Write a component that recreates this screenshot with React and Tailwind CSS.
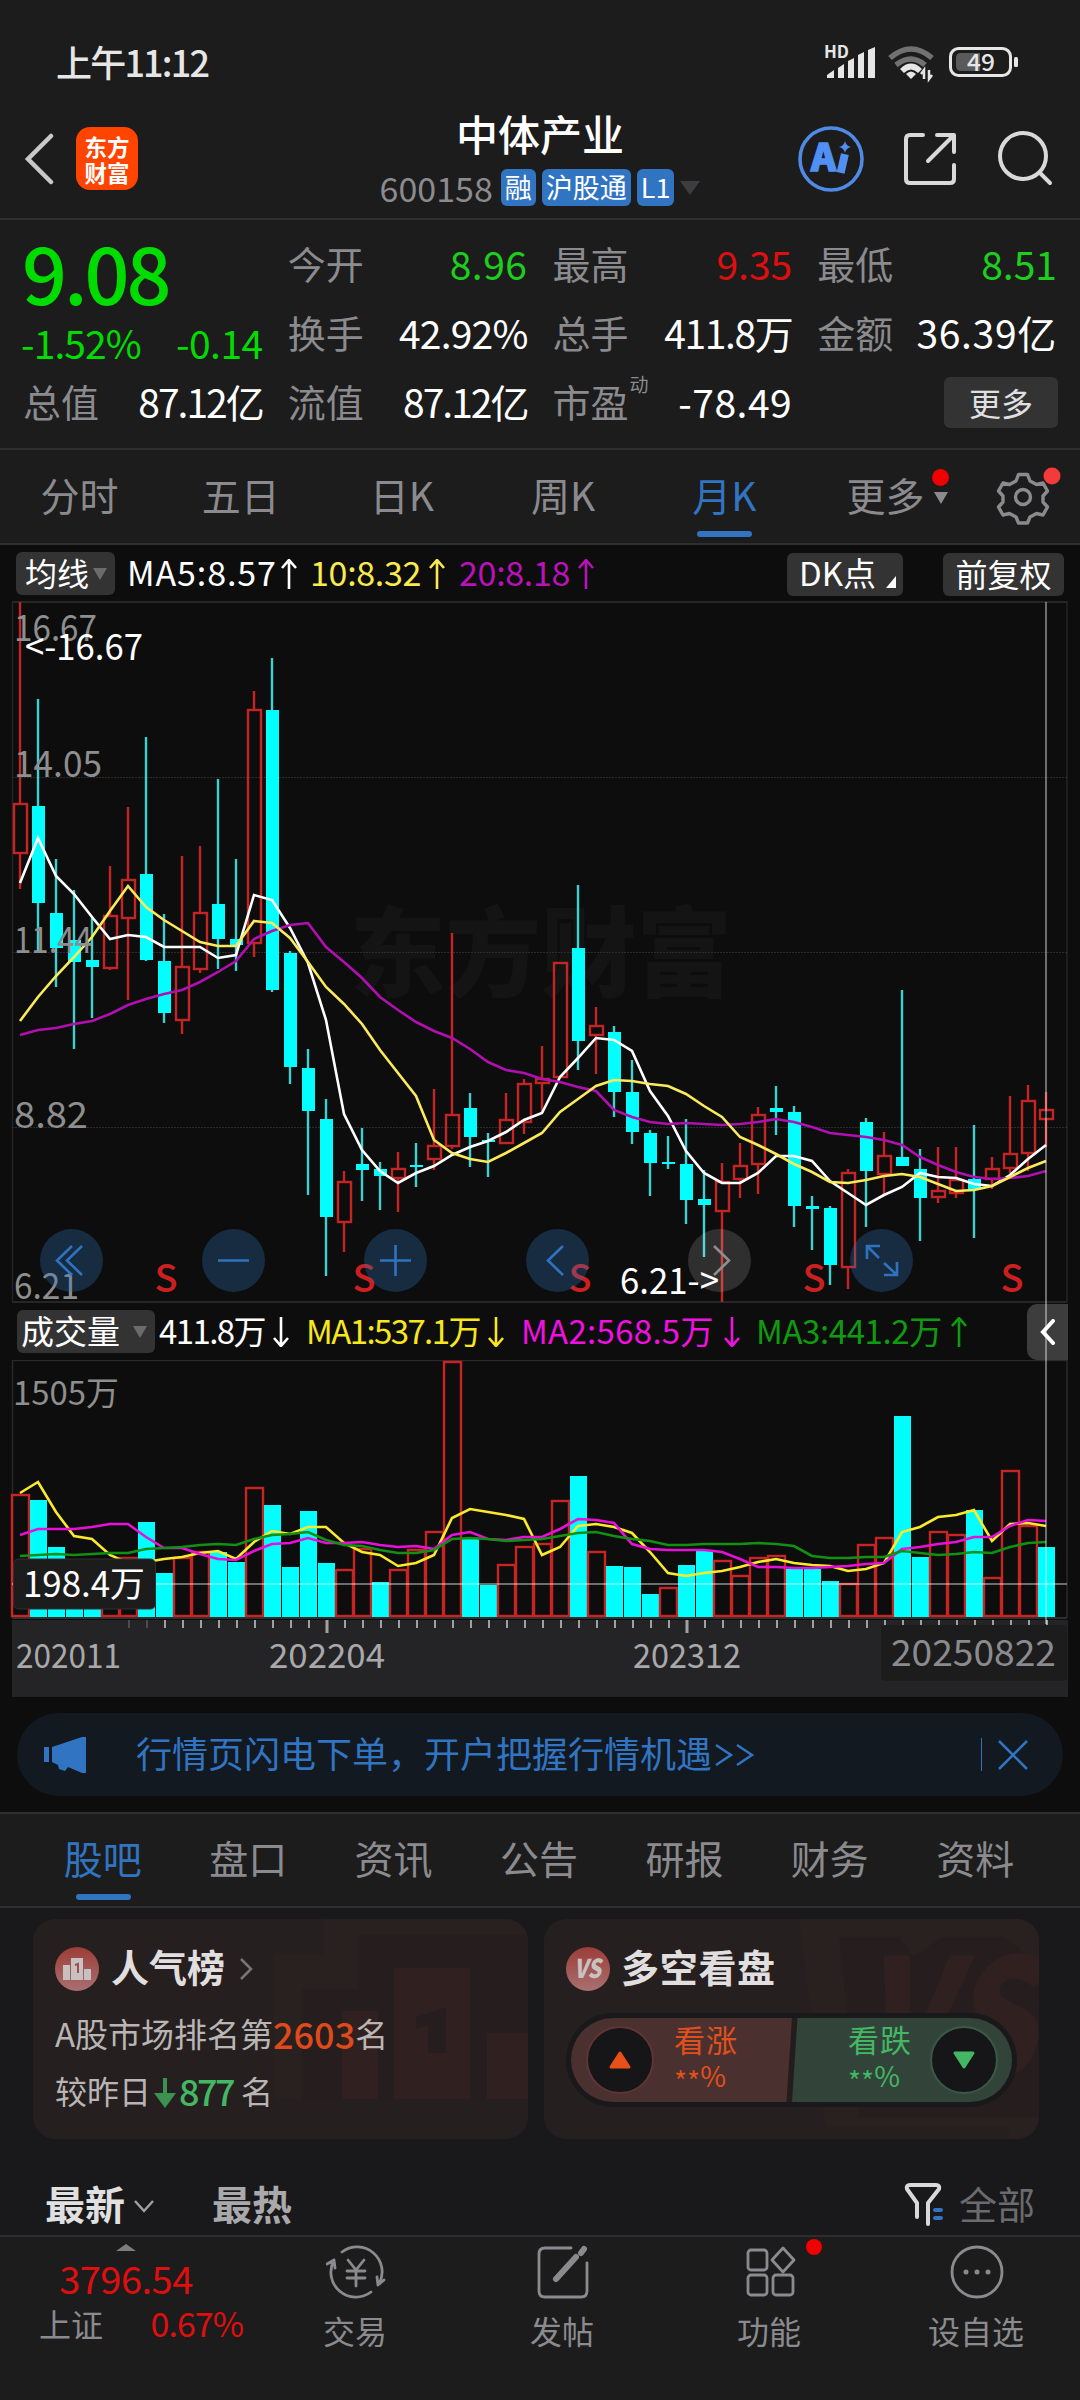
import React from 'react';

const FONT = "font-['Noto_Sans_CJK_SC','Noto_Sans',sans-serif]";

const STEP = 18;
const cx = (i) => 20 + i * STEP;

// [up, high, bodyTop, bodyBottom, low]
const candles = [
    [1, 602, 804, 853, 889], [0, 699, 806, 903, 953], [0, 859, 913, 948, 987], [0, 890, 940, 962, 1049],
    [0, 918, 960, 967, 1018], [1, 866, 916, 968, 970], [1, 807, 880, 918, 1000], [0, 737, 874, 960, 961],
    [0, 914, 961, 1013, 1023], [1, 856, 967, 1020, 1034], [1, 846, 913, 969, 973], [0, 779, 904, 939, 969],
    [0, 859, 939, 945, 971], [1, 691, 710, 943, 957], [0, 658, 710, 990, 992], [0, 951, 953, 1067, 1084],
    [0, 1049, 1068, 1111, 1195], [0, 1099, 1119, 1217, 1276], [1, 1171, 1182, 1222, 1252], [0, 1128, 1164, 1170, 1201],
    [0, 1162, 1169, 1176, 1210], [1, 1152, 1169, 1178, 1212], [0, 1143, 1165, 1167, 1187], [1, 1089, 1146, 1159, 1170],
    [1, 933, 1115, 1146, 1149], [0, 1093, 1108, 1137, 1167], [0, 1133, 1140, 1142, 1177], [1, 1093, 1120, 1143, 1143],
    [1, 1079, 1084, 1122, 1134], [1, 1046, 1079, 1083, 1113], [1, 963, 963, 1077, 1077], [0, 885, 948, 1041, 1070],
    [1, 1007, 1026, 1035, 1074], [0, 1026, 1032, 1092, 1117], [0, 1060, 1092, 1132, 1144], [0, 1130, 1133, 1163, 1196],
    [0, 1136, 1162, 1164, 1169], [0, 1119, 1164, 1200, 1224], [0, 1170, 1199, 1205, 1257], [1, 1163, 1182, 1211, 1302],
    [1, 1143, 1166, 1179, 1198], [1, 1107, 1115, 1164, 1194], [0, 1086, 1108, 1112, 1135], [0, 1106, 1112, 1206, 1227],
    [0, 1196, 1206, 1209, 1250], [0, 1206, 1208, 1265, 1285], [1, 1169, 1173, 1267, 1289], [0, 1118, 1122, 1171, 1227],
    [1, 1132, 1156, 1174, 1196], [0, 990, 1157, 1166, 1166], [0, 1149, 1169, 1198, 1241], [1, 1147, 1191, 1197, 1203],
    [1, 1147, 1180, 1193, 1198], [0, 1125, 1179, 1189, 1238], [1, 1157, 1169, 1179, 1189], [1, 1096, 1154, 1168, 1173],
    [1, 1085, 1101, 1153, 1171], [1, 1092, 1110, 1119, 1147],
];

const ma5 = [883, 838, 876, 894, 917, 939, 935, 937, 947, 947, 947, 958, 955, 895, 900, 928, 963, 1020, 1114, 1150, 1171, 1183, 1173, 1166, 1155, 1147, 1141, 1132, 1120, 1113, 1077, 1058, 1038, 1040, 1051, 1091, 1116, 1151, 1173, 1183, 1183, 1173, 1156, 1156, 1161, 1181, 1193, 1205, 1195, 1187, 1173, 1177, 1178, 1184, 1186, 1175, 1159, 1145];
const ma10 = [1021, 997, 976, 957, 937, 911, 886, 907, 920, 931, 942, 946, 946, 921, 923, 938, 962, 987, 1004, 1024, 1050, 1073, 1096, 1140, 1153, 1159, 1162, 1153, 1143, 1133, 1112, 1099, 1086, 1080, 1081, 1084, 1086, 1094, 1106, 1117, 1137, 1145, 1154, 1164, 1172, 1182, 1183, 1180, 1176, 1174, 1177, 1184, 1191, 1190, 1186, 1177, 1168, 1161];
const ma20 = [1035, 1030, 1028, 1024, 1021, 1014, 1005, 999, 994, 990, 982, 972, 961, 939, 931, 925, 923, 947, 962, 978, 997, 1010, 1022, 1031, 1038, 1049, 1062, 1070, 1073, 1079, 1082, 1087, 1091, 1110, 1117, 1122, 1124, 1123, 1124, 1125, 1124, 1122, 1119, 1122, 1127, 1133, 1135, 1137, 1140, 1145, 1157, 1165, 1172, 1177, 1179, 1178, 1176, 1171];

const volTops = [1494, 1500, 1547, 1565, 1570, 1575, 1557, 1522, 1573, 1557, 1551, 1552, 1562, 1487, 1505, 1567, 1511, 1563, 1569, 1548, 1582, 1569, 1549, 1531, 1361, 1539, 1585, 1564, 1546, 1543, 1500, 1476, 1551, 1566, 1567, 1594, 1587, 1565, 1551, 1560, 1575, 1557, 1555, 1569, 1569, 1581, 1583, 1544, 1537, 1416, 1557, 1531, 1534, 1510, 1577, 1470, 1525, 1547];
// indexes of the filled volume bars
const volDown = [1, 2, 3, 4, 7, 8, 11, 12, 14, 15, 16, 17, 20, 25, 26, 31, 33, 34, 35, 37, 38, 43, 44, 45, 49, 50, 53, 57];
const vma1 = [1493, 1482, 1512, 1536, 1539, 1555, 1563, 1562, 1559, 1557, 1553, 1551, 1559, 1542, 1531, 1534, 1527, 1527, 1543, 1552, 1555, 1566, 1563, 1555, 1518, 1509, 1512, 1515, 1519, 1555, 1547, 1526, 1524, 1527, 1533, 1552, 1573, 1576, 1573, 1571, 1567, 1562, 1559, 1563, 1565, 1566, 1571, 1569, 1563, 1532, 1527, 1517, 1515, 1510, 1541, 1524, 1523, 1526];
const vma2 = [1535, 1529, 1529, 1529, 1527, 1524, 1524, 1537, 1548, 1548, 1554, 1559, 1560, 1551, 1544, 1543, 1538, 1543, 1543, 1542, 1545, 1547, 1546, 1549, 1535, 1532, 1539, 1540, 1537, 1537, 1529, 1519, 1520, 1523, 1544, 1549, 1550, 1550, 1550, 1552, 1559, 1567, 1567, 1568, 1568, 1567, 1566, 1564, 1563, 1549, 1547, 1544, 1542, 1537, 1537, 1526, 1520, 1521];
const vma3 = [1556, 1555, 1554, 1555, 1554, 1553, 1553, 1549, 1548, 1547, 1545, 1544, 1545, 1539, 1535, 1534, 1532, 1540, 1545, 1546, 1550, 1553, 1553, 1550, 1539, 1538, 1539, 1541, 1540, 1539, 1536, 1533, 1532, 1536, 1539, 1541, 1545, 1545, 1544, 1544, 1544, 1543, 1544, 1546, 1556, 1558, 1558, 1557, 1557, 1551, 1553, 1555, 1554, 1552, 1553, 1547, 1543, 1542];

const points = (ys) => ys.map((y, i) => `${cx(i)},${y}`).join(' ');

const StatusBar = () => (
    <div className="flex h-[112px] items-center justify-between pt-[9px] pl-[56px] pr-[60px]">
        <span className="text-[36px] leading-[40px] font-medium tracking-[-1.8px] text-[#e6e6e6]">上午11:12</span>
        <svg className="overflow-visible" width="200" height="40" viewBox="820 42 200 40" fill="none">
            <text x="824" y="59" fontSize="17" fontWeight="700" fill="#e6e6e6" textLength="25" lengthAdjust="spacingAndGlyphs">HD</text>
            <g fill="#e6e6e6">
                <path d="M827 76l7-5v8h-7zM838 69l6-4v14h-6zM848 62l6-3v20h-6zM858 56l6-3v26h-6zM868 51l7-3v31h-7z" />
                <path d="M911 80l-5-5q5-5 10 0z" />
            </g>
            <g strokeWidth="5.5">
                <path d="M890 59q21-18 42 0" stroke="#717171" />
                <path d="M896 66q15-12 29 0" stroke="#717171" />
                <path d="M902 72q9-9 18 0" stroke="#e6e6e6" />
            </g>
            <path d="M924 80v-9l-3 4M929 71v9l3-4" stroke="#e6e6e6" strokeWidth="2.5" />
            <rect x="950.5" y="49.5" width="60" height="27" rx="8" stroke="#e6e6e6" strokeWidth="3" />
            <path d="M961 54h19v18h-19q-5 0-5-5v-8q0-5 5-5z" fill="#5a5a5a" />
            <rect x="1014" y="58" width="4" height="10" rx="1.5" fill="#e6e6e6" />
            <text x="967" y="72" fontSize="24" fontWeight="500" fill="#e6e6e6" textLength="28" lengthAdjust="spacingAndGlyphs">49</text>
        </svg>
    </div>
);

const Badge = ({ children }) => (
    <span className="h-[37px] rounded-[6px] bg-[#3174c2] px-[4px] text-[27px] leading-[35px] text-white">{children}</span>
);

const Header = () => (
    <div className="grid h-[108px] grid-cols-[1fr_auto_1fr] border-b-2 border-[#2e2e30]">
        <div className="flex items-center gap-[22px] pl-[24px] pb-[14px] pt-px">
            <svg width="30" height="54" viewBox="0 0 30 54" fill="none" stroke="#c9c9c9" strokeWidth="4.5" strokeLinecap="round">
                <path d="M27 4L4 27l23 23" />
            </svg>
            <div className="flex h-[63px] w-[62px] flex-col items-center justify-center rounded-[14px] bg-[#ff4400] text-[22.5px] leading-[26px] font-bold text-white">
                <span>东方</span>
                <span>财富</span>
            </div>
        </div>
        <div className="flex flex-col items-center">
            <h1 className="mt-[-1px] text-[42px] leading-[44px] font-medium text-white">中体产业</h1>
            <div className="mt-[14px] flex items-center gap-[6px]">
                <span className="mr-[2px] text-[34px] leading-[36px] text-[#8b8b8f]">600158</span>
                <Badge>融</Badge>
                <Badge>沪股通</Badge>
                <Badge>L1</Badge>
                <svg width="20" height="14" viewBox="0 0 20 14"><path d="M0 0h20L10 14z" fill="#3d3d3f" /></svg>
            </div>
        </div>
        <div className="flex items-center justify-end pr-[26px] pb-[13px]">
            <svg width="258" height="70" viewBox="796 123 258 70" fill="none">
                <circle cx="831" cy="158" r="31" stroke="#4f8ae6" strokeWidth="3.6" />
                <text x="811" y="170" fontSize="37" fontWeight="900" fill="#5090f5" stroke="#5090f5" strokeWidth="1.5" textLength="25" lengthAdjust="spacingAndGlyphs">A</text>
                <path d="M844 157l-2.500 11" stroke="#5090f5" strokeWidth="8" strokeLinecap="square" />
                <path d="M845 140q1 5 6 6q-5 1-6 6q-1-5-6-6q5-1 6-6z" fill="#5090f5" />
                <g stroke="#d9d9d9" strokeWidth="4" strokeLinecap="round" strokeLinejoin="round">
                    <path d="M923 134h-13q-4 0-4 4v40q0 4 4 4h40q4 0 4-4v-14M937 134h17v17M953 135l-25 25" />
                    <circle cx="1023" cy="155" r="23" />
                    <path d="M1040 172l10 10" />
                </g>
            </svg>
        </div>
    </div>
);

const Stat = ({ label, value, sup, color = 'text-white', tracking = '' }) => (
    <div className="flex h-[69px] items-center justify-between text-[38px] leading-[44px]">
        <span className="flex whitespace-nowrap text-[#8b8b8f]">
            {label}
            {sup && <sup className="top-[-5px] ml-px h-[20px] w-[18px] text-[19px] leading-[20px]">{sup}</sup>}
        </span>
        <span className={`text-[39px] whitespace-nowrap ${color} ${tracking}`}>{value}</span>
    </div>
);

const Quote = () => (
    <div className="grid h-[230px] grid-cols-4 gap-x-[25px] border-b-2 border-[#2e2e30] px-[23px] pt-[8px]">
        <div>
            <div className="flex h-[138px] flex-col text-[#00dc00]">
                <span className="mt-[2px] ml-[-1px] text-[79px] leading-[82px] font-medium tracking-[-3px]">9.08</span>
                <div className="mt-[6px] flex justify-between text-[39px] leading-[48px]">
                    <span className="ml-[-2px] tracking-[-0.9px]">-1.52%</span>
                    <span className="tracking-[-0.5px]">-0.14</span>
                </div>
            </div>
            <Stat label="总值" value="87.12亿" tracking="tracking-[-2px]" />
        </div>
        <div>
            <Stat label="今开" value="8.96" color="text-[#1ccf1c]" tracking="tracking-[0.5px]" />
            <Stat label="换手" value="42.92%" tracking="tracking-[-0.8px]" />
            <Stat label="流值" value="87.12亿" tracking="tracking-[-2px]" />
        </div>
        <div>
            <Stat label="最高" value="9.35" color="text-[#df0f0f]" />
            <Stat label="总手" value="411.8万" tracking="tracking-[-1.4px]" />
            <Stat label="市盈" sup="动" value="-78.49" tracking="tracking-[0.5px]" />
        </div>
        <div>
            <Stat label="最低" value="8.51" color="text-[#1ccf1c]" />
            <Stat label="金额" value="36.39亿" tracking="tracking-[0.7px]" />
            <div className="flex h-[69px] items-center justify-end">
                <button className="mr-[-1px] mt-[3px] h-[51px] w-[114px] rounded-[6px] bg-[#333333] text-[32px] leading-[46px] text-[#e0e0e0]">更多</button>
            </div>
        </div>
    </div>
);

const periods = ['分时', '五日', '日K', '周K', '月K', '更多'];

const PeriodTabs = () => (
    <div className="flex h-[95px] border-b-2 border-[#2e2e30] text-[39px] leading-[44px] text-[#8b8b8f]">
        {periods.map((name) => (
            <div key={name} className={`relative flex w-[161.2px] flex-col items-center pt-[22px] pr-[2px] ${name === '月K' ? 'text-[#3174c2]' : ''}`}>
                {name}
                {name === '月K' && <span className="mt-[15px] h-[6px] w-[55px] rounded-full bg-[#3174c2]" />}
                {name === '更多' && (
                    <svg className="absolute top-[19px] left-[126px]" width="18" height="36" viewBox="0 0 18 36">
                        <circle cx="8.5" cy="8.5" r="8.5" fill="#f00000" />
                        <path d="M2 23h14l-7 12z" fill="#8b8b8f" />
                    </svg>
                )}
            </div>
        ))}
        <svg className="mt-[17px] ml-[29px]" width="68" height="58" viewBox="996 468 68 58" fill="none">
            <path d="M1018.500 475.500h9l2.500 6.500 6.500 3.500 6.500-1.500 4.500 8-4.500 5v6l4.500 5-4.500 8-6.500-1.500-6.500 3.500-2.500 6h-9l-2.500-6-6.500-3.500-6.500 1.500-4.500-8 4.500-5v-6l-4.500-5 4.500-8 6.500 1.500 6.500-3.500z" stroke="#8b8b8f" strokeWidth="3.400" strokeLinejoin="round" />
            <circle cx="1023" cy="498" r="7.500" stroke="#8b8b8f" strokeWidth="3.400" />
            <circle cx="1052" cy="477" r="8.500" fill="#f53a3a" />
        </svg>
    </div>
);

const Arrow = ({ down, className = '' }) => (
    <svg className={className} width="16" height="30" viewBox="0 0 16 30" fill="none" stroke="currentColor" strokeWidth="2.6">
        <path d={down ? 'M8 0v29M1 21l7 8 7-8' : 'M8 30V1M1 9l7-8 7 8'} />
    </svg>
);

const MaRow = () => (
    <div className="flex h-[57px] items-center pl-[16px] pr-[16px] text-[33px] leading-[44px]">
        <button className="flex h-[43px] w-[99px] items-center rounded-[6px] bg-[#333333] pb-[3px] pl-[9px] text-[32px] text-white">
            均线
            <svg width="14" height="12" viewBox="0 0 14 12" className="mt-[3px] ml-[4px]"><path d="M0 0h14L7 12z" fill="#6b6b6b" /></svg>
        </button>
        <div className="flex w-[182px] items-center pl-[12px] text-white">
            <span className="mt-[-4px] w-[154px] text-[34px] tracking-[0.9px]">MA5:8.57</span><Arrow />
        </div>
        <div className="flex w-[148px] items-center pl-[13px] text-[#fbea4f]">
            <span className="mt-[-4px] w-[119px] text-[34px] tracking-[-0.3px]">10:8.32</span><Arrow />
        </div>
        <div className="flex items-center pl-[14px] text-[#b812b8]">
            <span className="mt-[-4px] w-[119px] text-[34px] tracking-[-0.3px]">20:8.18</span><Arrow />
        </div>
        <button className="mt-px ml-auto flex h-[43px] w-[116px] items-center rounded-[6px] bg-[#333333] pb-[4px] pl-[10px] text-white">
            <span className="w-[81px] whitespace-nowrap">DK点</span>
            <svg width="10" height="12" viewBox="0 0 10 12" className="mt-[19px] ml-[8px]"><path d="M10 0v12H0z" fill="#fff" /></svg>
        </button>
        <button className="mt-px ml-[40px] h-[43px] w-[121px] rounded-[6px] bg-[#333333] pb-[3px] text-[32px] leading-[38px] text-white">前复权</button>
    </div>
);

const priceLabels = [
    [641, '16.67', 83], [777, '14.05', 88], [953, '11.44', 78], [1128, '8.82', 74], [1299, '6.21', 65],
];

const KChart = () => (
    <svg className="block" width="1080" height="702" viewBox="0 601 1080 702" fill="none">
        <text x="350" y="989" fontSize="98" fontWeight="900" fill="#141414" textLength="382" lengthAdjust="spacingAndGlyphs">东方财富</text>
        <path d="M12.500 1302V602H1067V1302" stroke="#242424" strokeWidth="1.500" />
        <path d="M12 602H1067M12 1302H1067" stroke="#262626" strokeWidth="2" />
        <path d="M12 777.500H1067M12 952.500H1067M12 1127.500H1067" stroke="#2c2c2c" strokeDasharray="2 1" />
        {candles.map(([up, high, top, bottom, low], i) => (
            up ? (
                <g key={i} stroke="#c42424" strokeWidth="2.400">
                    <path d={`M${cx(i)} ${high}V${top}M${cx(i)} ${bottom}V${low}`} />
                    <rect x={cx(i) - 6} y={top} width="13" height={bottom - top} />
                </g>
            ) : (
                <g key={i}>
                    <path d={`M${cx(i)} ${high}V${low}`} stroke="#40d0d0" strokeWidth="2.400" />
                    <rect x={cx(i) - 6} y={top} width="13" height={bottom - top} fill="#00ffff" />
                </g>
            )
        ))}
        <polyline points={points(ma5)} stroke="#ffffff" strokeWidth="2.600" />
        <polyline points={points(ma20)} stroke="#b010b0" strokeWidth="2.600" />
        <polyline points={points(ma10)} stroke="#fbea5c" strokeWidth="2.600" />
        {priceLabels.map(([y, label, w]) => (
            <text key={label} x="14" y={y} fontSize="36" fill="#8e8e8e" textLength={w} lengthAdjust="spacingAndGlyphs">{label}</text>
        ))}
        <text x="25" y="660" fontSize="37" fill="#ffffff" textLength="118" lengthAdjust="spacingAndGlyphs">{'<-16.67'}</text>
        <text x="620" y="1294" fontSize="37" fill="#ffffff" textLength="99" lengthAdjust="spacingAndGlyphs">{'6.21->'}</text>
        {[166, 364, 580, 814, 1012].map((x) => (
            <text key={x} x={x} y="1291.500" fontSize="38" fontWeight="500" fill="#cc2020" textAnchor="middle">S</text>
        ))}
        {[71.500, 233.500, 395.500, 557.500, 881.500].map((x) => (
            <circle key={x} cx={x} cy="1260.500" r="31.500" fill="#3174c2" fillOpacity="0.29" />
        ))}
        <circle cx="719.500" cy="1260.500" r="31.500" fill="#ffffff" fillOpacity="0.14" />
        <g stroke="#2f73c0" strokeWidth="2.600">
            <path d="M72 1246l-15 14.500 15 14.500M82 1246l-15 14.500 15 14.500" />
            <path d="M218 1260.500h31M380 1260.500h31M395.500 1245v31" />
            <path d="M563 1246l-15 14.500 15 14.500" />
            <path d="M867 1259v-13h13M867 1246l12 12M897 1262v13h-13M897 1275l-13-12" />
        </g>
        <path d="M714 1246l15 14.500-15 14.500" stroke="#8e8e8e" strokeWidth="2.600" />
    </svg>
);

const VolumeHeader = () => (
    <div className="flex h-[57px] items-center pl-[17px] text-[33px] leading-[44px]">
        <button className="flex h-[43px] w-[138px] items-center rounded-[6px] bg-[#333333] pb-[3px] pl-[4px] text-[33px] text-white">
            成交量
            <svg width="14" height="12" viewBox="0 0 14 12" className="mt-[3px] ml-[13px]"><path d="M0 0h14L7 12z" fill="#6b6b6b" /></svg>
        </button>
        <div className="flex w-[151px] items-center pl-[4px] text-white">
            <span className="mt-[-4px] w-[114px] tracking-[-1.6px] whitespace-nowrap">411.8万</span><Arrow down />
        </div>
        <div className="flex w-[215px] items-center text-[#f8e71c]">
            <span className="mt-[-4px] w-[182px] tracking-[-1.6px] whitespace-nowrap">MA1:537.1万</span><Arrow down />
        </div>
        <div className="flex w-[235px] items-center text-[#f010e0]">
            <span className="mt-[-4px] w-[203px] tracking-[0.3px] whitespace-nowrap">MA2:568.5万</span><Arrow down />
        </div>
        <div className="flex items-center text-[#109a10]">
            <span className="mt-[-4px] w-[195px] tracking-[-0.4px] whitespace-nowrap">MA3:441.2万</span><Arrow />
        </div>
        <button className="ml-auto mr-[12px] flex h-[56px] w-[41px] items-center justify-center rounded-l-[10px] bg-[#3d3d3d]">
            <svg width="16" height="26" viewBox="0 0 16 26" fill="none" stroke="#fff" strokeWidth="4" strokeLinecap="round"><path d="M13 2L3 13l10 11" /></svg>
        </button>
    </div>
);

const VolumeChart = () => (
    <svg className="block" width="1080" height="337" viewBox="0 1360 1080 337" fill="none">
        <path d="M12.500 1618V1360.500H1067V1618" stroke="#2a2a2a" strokeWidth="1.500" />
        <path d="M12 1618H1067" stroke="#2e2e2e" strokeWidth="2" />
        <rect x="12" y="1620" width="1056" height="77" fill="#242427" />
        {volTops.map((y, i) => (
            volDown.includes(i)
                ? <rect key={i} x={12 + i * STEP} y={y} width="17" height={1617 - y} fill="#00ffff" />
                : <rect key={i} x={12 + i * STEP} y={y + 1} width="17" height={1616 - y - 1} stroke="#c82424" strokeWidth="2.400" />
        ))}
        <polyline points={points(vma1)} stroke="#fbea2c" strokeWidth="2.600" />
        <polyline points={points(vma2)} stroke="#e810d8" strokeWidth="2.600" />
        <polyline points={points(vma3)} stroke="#129012" strokeWidth="2.600" />
        <path d="M12 1584H1067" stroke="#ffffff" strokeOpacity="0.4" strokeWidth="2" />
        <text x="13" y="1405" fontSize="33" fill="#8e8e8e" textLength="106" lengthAdjust="spacingAndGlyphs">1505万</text>
        <rect x="13.500" y="1559" width="142" height="50" rx="5" fill="#1c1c1c" stroke="#303030" />
        <text x="23" y="1597" fontSize="35" fill="#ffffff" textLength="122" lengthAdjust="spacingAndGlyphs">198.4万</text>
        {candles.map((_, i) => {
            if (i < 6) return null;
            const major = i === 17 || i === 37;
            return <path key={i} d={`M${21 + i * STEP} 1620v${major ? 13 : 8}`} stroke={i < 8 ? '#4c4c4e' : '#a0a0a2'} strokeWidth={major ? 3 : 2} />;
        })}
        <g fontSize="34" fill="#a9a9ab">
            <text x="16" y="1668" textLength="105" lengthAdjust="spacingAndGlyphs">202011</text>
            <text x="269" y="1668" textLength="116" lengthAdjust="spacingAndGlyphs">202204</text>
            <text x="633" y="1668" textLength="108" lengthAdjust="spacingAndGlyphs">202312</text>
        </g>
        <rect x="881" y="1625" width="186" height="56" rx="4" fill="#1c1c1c" />
        <text x="891" y="1666" fontSize="36" fill="#8b8b8f" textLength="165" lengthAdjust="spacingAndGlyphs">20250822</text>
    </svg>
);

const Banner = () => (
    <div className="mx-[17px] mt-[16px] flex h-[83px] items-center rounded-full bg-[#121920] text-[36px] leading-[44px] text-[#3174c2]">
        <svg className="ml-[27px]" width="43" height="38" viewBox="0 0 43 38" fill="#3174c2">
            <path d="M0 11h5v15H0zM8 11L38 1h4v36h-4l-14-6-3 4-6-2-1-4-6-3z" />
        </svg>
        <span className="mt-[-5px] ml-[49px] whitespace-nowrap">行情页闪电下单，开户把握行情机遇</span>
        <svg className="ml-[3px]" width="40" height="28" viewBox="0 0 40 28" fill="none" stroke="#3174c2" strokeWidth="2.500">
            <path d="M1 4l15 10-15 10M22 4l15 10-15 10" />
        </svg>
        <span className="ml-auto h-[33px] w-px bg-[#3174c2]" />
        <svg className="ml-[16px] mr-[35px]" width="30" height="30" viewBox="0 0 30 30" fill="none" stroke="#3174c2" strokeWidth="2.500">
            <path d="M1 1l28 28M29 1L1 29" />
        </svg>
    </div>
);

const sections = ['股吧', '盘口', '资讯', '公告', '研报', '财务', '资料'];

const SectionTabs = () => (
    <div className="mt-[16px] flex h-[96px] border-y-2 border-[#2e2e30] bg-[#1c1c1c] px-[31px] text-[39px] leading-[44px] text-[#8b8b8f]">
        {sections.map((name, i) => (
            <div key={name} className={`flex flex-1 flex-col items-center pt-[21px] ${i === 0 ? 'text-[#3174c2]' : ''}`}>
                <span className="ml-[-2px]">{name}</span>
                {i === 0 && <span className="mt-[15px] h-[6px] w-[55px] rounded-full bg-[#3174c2]" />}
            </div>
        ))}
    </div>
);

const RankCard = () => (
    <div className="relative h-[220px] w-[495px] overflow-hidden rounded-[22px] bg-[#261f1f] pl-[22px] text-[#b9b5b5]">
        <svg className="absolute top-0 right-0" width="260" height="220" viewBox="0 0 260 220">
            <path d="M6 36h50V0h204v180H6z" fill="#292120" />
            <path d="M34 70h56V16h170v164H34z" fill="#261e1e" />
            <path d="M74 92h36v88H74zM126 49h76v131h-76zM219 114h41v66h-41z" fill="#302120" />
            <path d="M148 98l30-10v46h-18v-28l-12 4z" fill="#261e1e" />
        </svg>
        <div className="relative flex items-center pt-[28px]">
            <svg width="44" height="44" viewBox="0 0 44 44">
                <defs>
                    <linearGradient id="badge" x1="0" y1="0" x2="0" y2="1">
                        <stop offset="0" stopColor="#9c3d38" />
                        <stop offset="1" stopColor="#a87070" />
                    </linearGradient>
                </defs>
                <circle cx="22" cy="22" r="22" fill="url(#badge)" />
                <path d="M8 18h7v15H8zM16 11h12v22H16zM29 22h7v11h-7z" fill="#c9c1c1" />
                <path d="M20 18l3-1v9" stroke="#9c5050" strokeWidth="2" fill="none" />
            </svg>
            <span className="mt-[-6px] ml-[12px] text-[38px] leading-[44px] font-bold text-[#e0dede]">人气榜</span>
            <svg className="ml-[15px]" width="13" height="22" viewBox="0 0 13 22" fill="none" stroke="#7a7575" strokeWidth="2.500"><path d="M1 1l10 10L1 21" /></svg>
        </div>
        <div className="relative mt-[18px] flex text-[33px] leading-[48px]">
            A股市场排名第<b className="text-[36px] font-medium text-[#de4a1c]">2603</b>名
        </div>
        <div className="relative mt-[9px] flex items-center text-[32px] leading-[48px]">
            较昨日
            <svg className="mt-[5px] mx-[3px]" width="22" height="30" viewBox="0 0 22 30" fill="#3c9150"><path d="M9 0h4v15h9L11 30 0 15h9z" /></svg>
            <b className="mr-[8px] text-[36px] font-medium tracking-[-2.5px] text-[#43b764]">877</b>名
        </div>
    </div>
);

const VsCard = () => (
    <div className="relative h-[220px] w-[495px] overflow-hidden rounded-[22px] bg-[#261f1f] pl-[22px]">
        <svg className="absolute top-0 right-0" width="260" height="220" viewBox="0 0 260 220">
            <path d="M20 0h240v220h-30v-12H46z" fill="#292120" />
            <path d="M60 18h60l14 20 30-20h60q36 20 36 60v120H80z" fill="#261e1e" />
            <text x="80" y="160" fontSize="166" fontWeight="900" fontStyle="italic" fill="#302120" textLength="176" lengthAdjust="spacingAndGlyphs">VS</text>
        </svg>
        <div className="relative flex items-center pt-[28px]">
            <svg width="44" height="44" viewBox="0 0 44 44">
                <circle cx="22" cy="22" r="22" fill="url(#badge)" />
                <text x="8" y="31" fontSize="26" fontWeight="900" fontStyle="italic" fill="#c9c1c1" textLength="27" lengthAdjust="spacingAndGlyphs">VS</text>
            </svg>
            <span className="mt-[-6px] ml-[11px] text-[38px] leading-[44px] font-bold tracking-[0.7px] text-[#e0dede]">多空看盘</span>
        </div>
        <div className="relative mt-[22px] flex h-[94px] w-[451px] overflow-hidden rounded-full border-[5px] border-[#19191b] bg-[#231d1d] text-[31px] leading-[42px]">
            <div className="flex w-[221px] items-center bg-[#4a302e] pl-[15px] text-[#e0501e] [clip-path:polygon(0_0,100%_0,97.5%_100%,0_100%)]">
                <span className="flex h-[68px] w-[68px] items-center justify-center rounded-full border-2 border-[#603533] bg-[#161618]">
                    <svg width="22" height="18" viewBox="0 0 22 18"><path d="M11 2l9 14H2z" fill="#e8501a" stroke="#e8501a" strokeWidth="3" strokeLinejoin="round" /></svg>
                </span>
                <div className="mt-[-8px] ml-[20px] flex flex-col">
                    <span className="tracking-[1px]">看涨</span>
                    <span className="mt-[-4px] text-[28px] leading-[38px]"><span className="relative top-[5px]">**</span>%</span>
                </div>
            </div>
            <div className="flex flex-1 items-center justify-end bg-[#324439] pr-[14px] text-[#43b764] [clip-path:polygon(2.5%_0,100%_0,100%_100%,0_100%)]">
                <div className="mt-[-8px] mr-[18px] flex flex-col">
                    <span className="tracking-[1px]">看跌</span>
                    <span className="mt-[-4px] text-[28px] leading-[38px]"><span className="relative top-[5px]">**</span>%</span>
                </div>
                <span className="flex h-[68px] w-[68px] items-center justify-center rounded-full border-2 border-[#3a5a47] bg-[#161618]">
                    <svg width="22" height="18" viewBox="0 0 22 18"><path d="M11 16L2 2h18z" fill="#43b764" stroke="#43b764" strokeWidth="3" strokeLinejoin="round" /></svg>
                </span>
            </div>
        </div>
    </div>
);

const SortRow = () => (
    <div className="flex h-[96px] items-center pl-[45px] pr-[45px] pt-[32px] text-[40px] leading-[44px]">
        <span className="font-bold text-[#e0e0e0]">最新</span>
        <svg className="mt-[6px] ml-[9px]" width="20" height="13" viewBox="0 0 20 13" fill="none" stroke="#a0a0a0" strokeWidth="2.500"><path d="M1 1l9 10 9-10" /></svg>
        <span className="ml-[58px] font-bold text-[#a9a9ab]">最热</span>
        <svg className="mt-[3px] ml-auto mr-[15px]" width="40" height="44" viewBox="0 0 40 44" fill="none" stroke="#d9d9d9" strokeWidth="4" strokeLinecap="round" strokeLinejoin="round">
            <path d="M13 34V20L3 6q-1-4 3-4h26q4 0 3 4L24 20v21" />
            <path d="M31 27h6M31 35h6" stroke="#3174c2" />
        </svg>
        <span className="text-[38px] text-[#6b6b6e]">全部</span>
    </div>
);

const NavItem = ({ label, dot, children }) => (
    <div className="relative flex w-[207px] flex-col items-center">
        <svg className="mt-[7px]" width="60" height="56" viewBox="-30 -28 60 56" fill="none" stroke="#8b8b8f" strokeWidth="2.800" strokeLinecap="round" strokeLinejoin="round">
            {children}
        </svg>
        {dot && <span className="absolute top-[2px] left-[140px] h-[16px] w-[16px] rounded-full bg-[#f00000]" />}
        <span className="mt-[8px] ml-[-1px] text-[32px] leading-[44px] text-[#8b8b8f]">{label}</span>
    </div>
);

const BottomNav = () => (
    <div className="flex h-[165px] border-t-2 border-[#2e2e30] bg-[#1c1c1c]">
        <div className="flex w-[252px] flex-col items-center">
            <svg className="mt-[7px]" width="20" height="7" viewBox="0 0 20 7"><path d="M10 0l10 7H0z" fill="#7d7d80" /></svg>
            <span className="mt-[4px] text-[38px] leading-[46px] tracking-[-0.5px] text-[#df0f0f]">3796.54</span>
            <div className="mt-[2px] flex w-full items-center justify-between pr-[9px] pl-[39px] leading-[40px]">
                <span className="text-[32px] text-[#8b8b8f]">上证</span>
                <span className="text-[34px] tracking-[-1px] text-[#df0f0f]">0.67%</span>
            </div>
        </div>
        <NavItem label="交易">
            <path d="M-14 -20a25 25 0 0 1 37 32M15 20a25 25 0 0 1 -37 -32M-29 -8l7-4 1 8M28 8l-6 5-1-8" />
            <path d="M-8 -12l8 10 8-10M0 -2v16M-9 -1h18M-9 6h18" />
        </NavItem>
        <NavItem label="发帖">
            <path d="M8 -24h-26q-6 0-6 6v37q0 6 6 6h36q6 0 6-6v-28" />
            <path d="M-7 7l20-22M21 -23l-3 4" strokeWidth="6" />
        </NavItem>
        <NavItem label="功能" dot>
            <rect x="-22" y="-22" width="19" height="20" rx="3" />
            <rect x="-22" y="3" width="19" height="20" rx="3" />
            <rect x="3" y="3" width="20" height="20" rx="3" />
            <path d="M13 -24l11 12-11 12L2 -12z" />
        </NavItem>
        <NavItem label="设自选">
            <circle r="25" />
            <path d="M-11 0h.01M0 0h.01M11 0h.01" strokeWidth="5" />
        </NavItem>
    </div>
);

const App = () => (
    <div className={`h-[2400px] w-[1080px] overflow-hidden bg-[#0d0d0d] ${FONT}`}>
        <div className="bg-[#1c1c1c]">
            <StatusBar />
            <Header />
            <Quote />
            <PeriodTabs />
        </div>
        <MaRow />
        <div className="relative mt-[-1px]">
            <KChart />
            <VolumeHeader />
            <VolumeChart />
            {/* crosshair */}
            <span className="absolute top-[1px] left-[1045px] h-[1022px] w-[2px] bg-white/40" />
        </div>
        <Banner />
        <SectionTabs />
        <div className="bg-[#19191b]">
            <div className="flex gap-[16px] pt-[11px] pl-[33px]">
                <RankCard />
                <VsCard />
            </div>
            <SortRow />
        </div>
        <BottomNav />
    </div>
);

export default App;
